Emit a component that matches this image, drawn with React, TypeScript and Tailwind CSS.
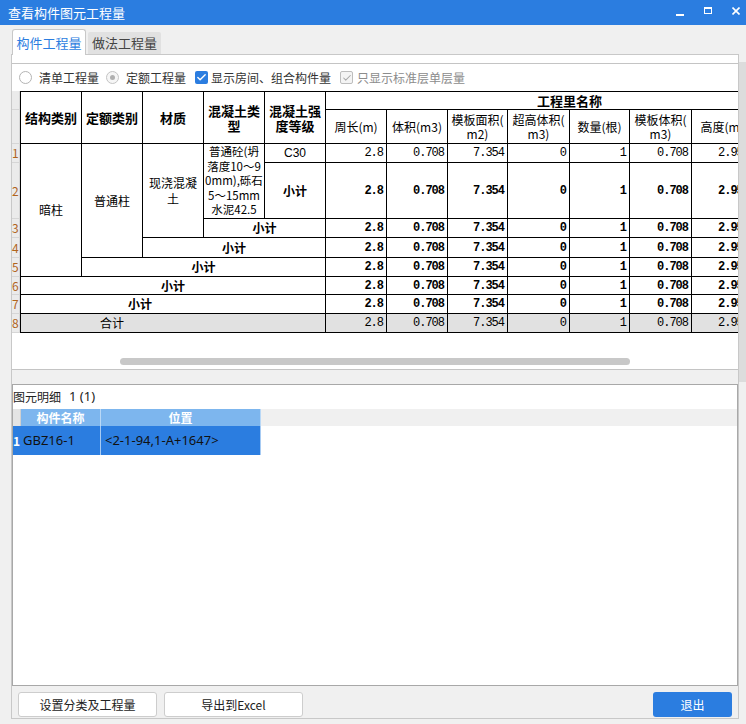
import { Check } from "lucide-react";

const NUM_COLS = [
  "col-start-6",
  "col-start-7",
  "col-start-8",
  "col-start-9",
  "col-start-10",
  "col-start-11",
  "col-start-12",
  "col-start-13",
];

const VALUES = ["2.8", "0.708", "7.354", "0", "1", "0.708", "2.950", ""];

const NUM_ROWS = [
  { row: "row-start-3", bold: false, gray: false },
  { row: "row-start-4", bold: true, gray: false },
  { row: "row-start-5", bold: true, gray: false },
  { row: "row-start-6", bold: true, gray: false },
  { row: "row-start-7", bold: true, gray: false },
  { row: "row-start-8", bold: true, gray: false },
  { row: "row-start-9", bold: true, gray: false },
  { row: "row-start-10", bold: false, gray: true },
];

// row number column heights follow the grid rows
const RN_ROWS = [
  { h: "h-[19px]", n: "1" },
  { h: "h-[56px]", n: "2" },
  { h: "h-[19px]", n: "3" },
  { h: "h-[20px]", n: "4" },
  { h: "h-[19px]", n: "5" },
  { h: "h-[18px]", n: "6" },
  { h: "h-[19px]", n: "7" },
  { h: "h-[19px]", n: "8" },
];

const cell = "border-r border-b border-black flex items-center justify-center";

function QuantityGrid() {
  return (
    <div className="grid w-max border-t border-l border-black text-[12px] text-black grid-cols-[61px_61px_61px_61px_61px_61px_61px_60px_62px_60px_62px_61px_61px] grid-rows-[18px_34px_19px_56px_19px_20px_19px_18px_19px_19px]">
      {/* header */}
      <div className={`${cell} col-start-1 row-start-1 row-span-2 font-bold text-[13px]`}>结构类别</div>
      <div className={`${cell} col-start-2 row-start-1 row-span-2 font-bold text-[13px]`}>定额类别</div>
      <div className={`${cell} col-start-3 row-start-1 row-span-2 font-bold text-[13px]`}>材质</div>
      <div className={`${cell} col-start-4 row-start-1 row-span-2 font-bold text-[13px] text-center leading-[15px]`}>
        混凝土类
        <br />型
      </div>
      <div className={`${cell} col-start-5 row-start-1 row-span-2 font-bold text-[13px] text-center leading-[15px]`}>
        混凝土强
        <br />
        度等级
      </div>
      <div className={`${cell} col-start-6 col-span-8 row-start-1 font-bold text-[13px]`}>工程里名称</div>
      <div className={`${cell} col-start-6 row-start-2`}>周长(m)</div>
      <div className={`${cell} col-start-7 row-start-2`}>体积(m3)</div>
      <div className={`${cell} col-start-8 row-start-2 text-center leading-[14px]`}>
        模板面积(
        <br />
        m2)
      </div>
      <div className={`${cell} col-start-9 row-start-2 text-center leading-[14px]`}>
        超高体积(
        <br />
        m3)
      </div>
      <div className={`${cell} col-start-10 row-start-2`}>数量(根)</div>
      <div className={`${cell} col-start-11 row-start-2 text-center leading-[14px]`}>
        模板体积(
        <br />
        m3)
      </div>
      <div className={`${cell} col-start-12 row-start-2 whitespace-nowrap`}>高度(m)</div>
      <div className={`${cell} col-start-13 row-start-2`}></div>

      {/* label columns */}
      <div className={`${cell} col-start-1 row-start-3 row-span-5`}>暗柱</div>
      <div className={`${cell} col-start-2 row-start-3 row-span-4`}>普通柱</div>
      <div className={`${cell} col-start-3 row-start-3 row-span-3 text-center leading-[16px]`}>
        现浇混凝
        <br />土
      </div>
      <div className={`border-r border-b border-black col-start-4 row-start-3 row-span-2 text-center text-[11.5px] leading-[14.6px] whitespace-nowrap overflow-hidden`}>
        普通砼(坍
        <br />
        落度10～9
        <br />
        0mm),砾石
        <br />
        5～15mm
        <br />
        水泥42.5
      </div>
      <div className={`${cell} col-start-5 row-start-3 font-['Liberation_Sans',sans-serif]`}>C30</div>
      <div className={`${cell} col-start-5 row-start-4 font-bold`}>小计</div>
      <div className={`${cell} col-start-4 col-span-2 row-start-5 font-bold`}>小计</div>
      <div className={`${cell} col-start-3 col-span-3 row-start-6 font-bold`}>小计</div>
      <div className={`${cell} col-start-2 col-span-4 row-start-7 font-bold`}>小计</div>
      <div className={`${cell} col-start-1 col-span-5 row-start-8 font-bold`}>小计</div>
      <div className={`border-r border-b border-black flex items-center col-start-1 col-span-5 row-start-9 font-bold pl-[107px]`}>小计</div>
      <div className={`border-r border-b border-black flex items-center col-start-1 col-span-5 row-start-10 bg-[#e1e1e1] pl-[79px]`}>合计</div>

      {/* values */}
      {NUM_ROWS.map((r) =>
        NUM_COLS.map((c, i) => (
          <div
            key={r.row + c}
            className={`${r.row} ${c} border-r border-b border-black flex items-center justify-end pr-[3px] font-['Liberation_Mono',monospace] text-[12px] tracking-[-1px] ${
              r.bold ? "font-bold" : ""
            } ${r.gray ? "bg-[#e1e1e1]" : ""}`}
          >
            {VALUES[i]}
          </div>
        )),
      )}
    </div>
  );
}

export default function App() {
  return (
    <div className="w-[746px] h-[724px] bg-[#f0f0f0] overflow-hidden flex flex-col font-['Noto_Sans_CJK_SC','Noto_Sans',sans-serif] text-[#222]">
      {/* title bar */}
      <div className="h-[25px] shrink-0 bg-[#2b7de0] flex items-center pl-[8px] pr-[6px] text-white">
        <span className="text-[13px]">查看构件图元工程量</span>
        <div className="ml-auto flex items-center gap-[20px]">
          <span className="block w-[8px] h-[2px] bg-white mt-[4px]" />
          <span className="block w-[8px] h-[7px] border border-white border-t-2 -mt-[4px]" />
          <svg width="8" height="8" viewBox="0 0 8 8" className="-mt-[4px]">
            <path d="M0.5 0.5 L7.5 7.5 M7.5 0.5 L0.5 7.5" stroke="white" strokeWidth="1.6" />
          </svg>
        </div>
      </div>

      {/* tabs */}
      <div className="h-[29px] shrink-0 flex items-end pl-[12px] gap-[2px]">
        <div className="relative z-10 -mb-px h-[26px] w-[74px] bg-white border border-b-0 border-[#c8c8c8] rounded-t-[3px] flex items-center justify-center text-[13px] text-[#2b7de0]">
          构件工程量
        </div>
        <div className="h-[22px] w-[73px] bg-[#e1e1e1] rounded-t-[2px] flex items-center justify-center text-[13px] text-[#444]">
          做法工程量
        </div>
      </div>

      {/* tab page */}
      <div className="flex">
        <div className="ml-[11px] w-[728px] h-[665px] border border-[#c8c8c8] bg-white flex flex-col">
          <div className="h-[8px] shrink-0" />

          {/* top pane */}
          <div className="h-[307px] shrink-0 border-t border-b border-[#c4c4c4] flex flex-col">
            <div className="h-[27px] shrink-0 flex items-center pl-[7px] text-[12px] text-[#333]">
              <span className="w-[13px] h-[13px] rounded-full border border-[#b4b4b4] bg-white" />
              <span className="ml-[7px]">清单工程量</span>
              <span className="ml-[7px] w-[13px] h-[13px] rounded-full border border-[#c4c4c4] bg-[#f6f6f6] flex items-center justify-center">
                <span className="w-[5px] h-[5px] rounded-full bg-[#b0b0b0]" />
              </span>
              <span className="ml-[7px]">定额工程量</span>
              <span className="ml-[9px] w-[13px] h-[13px] rounded-[2px] bg-[#2b7de0] flex items-center justify-center">
                <Check size={11} strokeWidth={3} color="white" />
              </span>
              <span className="ml-[3px]">显示房间、组合构件量</span>
              <span className="ml-[9px] w-[13px] h-[13px] rounded-[2px] border border-[#bdbdbd] bg-[#f4f4f4] flex items-center justify-center">
                <Check size={10} strokeWidth={2.5} color="#a8a8a8" />
              </span>
              <span className="ml-[4px] text-[#8c8c8c]">只显示标准层单层量</span>
            </div>

            <div className="flex h-[242px] shrink-0">
              <div className="w-[8px] shrink-0 bg-[#ebebeb] border-r border-[#d6d6d6] flex flex-col text-[12px] leading-none text-[#b0641c]">
                <div className="h-[19px] border-b border-[#d6d6d6]" />
                <div className="h-[34px] border-b border-[#d6d6d6]" />
                {RN_ROWS.map((r) => (
                  <div key={r.n} className={`${r.h} border-b border-[#d6d6d6] flex items-center`}>
                    {r.n}
                  </div>
                ))}
              </div>
              <div className="flex-1 overflow-hidden">
                <QuantityGrid />
              </div>
            </div>

            <div className="flex-1 relative">
              <div className="mt-[25px] ml-[108px] w-[510px] h-[7px] rounded-full bg-[#c8c8c8]" />
            </div>
          </div>

          <div className="h-[14px] shrink-0 bg-[#f0f0f0]" />

          {/* bottom pane */}
          <div className="h-[302px] shrink-0 border border-[#a8a8a8] flex flex-col">
            <div className="h-[24px] shrink-0 flex items-center text-[12px] text-[#222]">
              <span>图元明细</span>
              <span className="ml-[8px] font-['Noto_Sans',sans-serif] text-[13px]">1 (1)</span>
            </div>
            <div className="h-[17px] shrink-0 flex bg-[#f0f0f0]">
              <div className="w-[8px] bg-[#e4e4e4] border-r border-[#d0d0d0]" />
              <div className="w-[80px] bg-[#7db6ee] border-r border-[#b9d8f6] flex items-center justify-center text-[12px] font-bold text-white">
                构件名称
              </div>
              <div className="w-[160px] bg-[#7db6ee] border-r border-[#b9d8f6] flex items-center justify-center text-[12px] font-bold text-white">
                位置
              </div>
            </div>
            <div className="h-[29px] shrink-0 flex">
              <div className="w-[8px] bg-[#2b7de0] flex items-center text-[12px] font-bold text-white">1</div>
              <div className="w-[80px] bg-[#2b7de0] border-r border-[#a7cbf3] flex items-center pl-[2px] text-[13px] text-[#111] font-['Noto_Sans',sans-serif]">
                GBZ16-1
              </div>
              <div className="w-[160px] bg-[#2b7de0] border-r border-[#a7cbf3] flex items-center pl-[4px] text-[13px] text-[#111] font-['Noto_Sans',sans-serif]">
                &lt;2-1-94,1-A+1647&gt;
              </div>
            </div>
            <div className="flex-1" />
          </div>

          {/* buttons */}
          <div className="flex-1 bg-[#f0f0f0] flex items-start pt-[6px] px-[6px] gap-[7px]">
            <button className="w-[139px] h-[25px] bg-white border border-[#cdcdcd] rounded-[3px] text-[12px] text-[#222]">
              设置分类及工程量
            </button>
            <button className="w-[139px] h-[25px] bg-white border border-[#cdcdcd] rounded-[3px] text-[12px] text-[#222]">
              导出到Excel
            </button>
            <button className="ml-auto w-[79px] h-[25px] bg-[#2b7de0] rounded-[3px] text-[12px] text-white">
              退出
            </button>
          </div>
        </div>
        <div className="w-[7px] h-[320px] mt-[8px] bg-[#dcdcdc]" />
      </div>
    </div>
  );
}
